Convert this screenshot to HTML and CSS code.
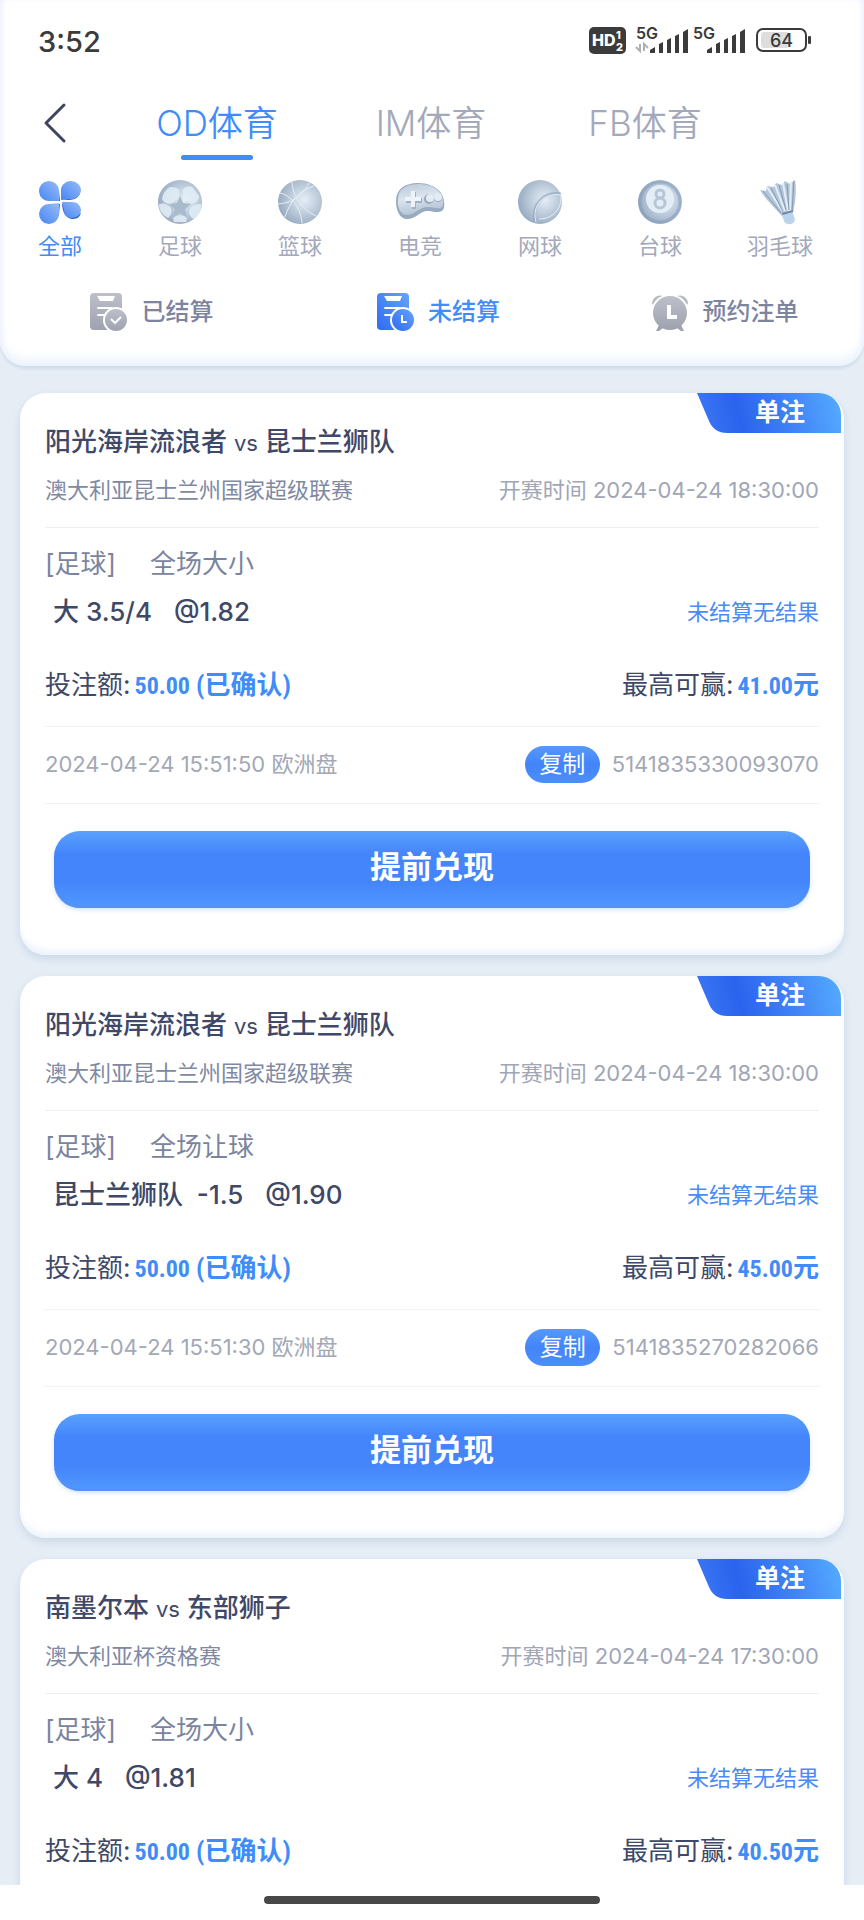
FILE: index.html
```
<!DOCTYPE html>
<html lang="zh-CN">

<head>
  <meta charset="UTF-8">
  <meta name="viewport" content="width=device-width, initial-scale=1.0">
  <title>注单记录</title>
  <link rel="stylesheet" href="styles.css">
</head>

<body>
  <!-- shared gradients for the icons -->
  <svg class="defs" aria-hidden="true">
    <defs>
      <radialGradient id="ball" cx="0.6" cy="0.45" r="0.6">
        <stop offset="0" stop-color="#e6eef6" />
        <stop offset="0.55" stop-color="#bccbdb" />
        <stop offset="1" stop-color="#98abc1" />
      </radialGradient>
      <linearGradient id="petal" x1="1" y1="0" x2="0" y2="1">
        <stop offset="0" stop-color="#97bcf8" />
        <stop offset="1" stop-color="#4785f3" />
      </linearGradient>
      <linearGradient id="pad" x1="0" y1="0" x2="0.3" y2="1">
        <stop offset="0" stop-color="#b9c7d8" />
        <stop offset="0.5" stop-color="#dbe4ee" />
        <stop offset="1" stop-color="#b4c3d5" />
      </linearGradient>
      <linearGradient id="gray" x1="0" y1="0" x2="0" y2="1">
        <stop offset="0" stop-color="#bdc0c9" />
        <stop offset="1" stop-color="#9ea2ae" />
      </linearGradient>
      <linearGradient id="blue" x1="1" y1="0" x2="0" y2="1">
        <stop offset="0" stop-color="#64a4fb" />
        <stop offset="1" stop-color="#2e6bf3" />
      </linearGradient>
    </defs>
  </svg>

  <div class="app">
    <header class="header">
      <div class="status-bar">
        <span class="clock">3:52</span>
        <svg class="status-icons" width="224" height="38" viewBox="0 -4 224 38" aria-hidden="true">
          <rect x="0" y="1" width="37" height="27" rx="5" fill="#3b3b3b" />
          <text x="3" y="20" font-size="16" font-weight="800" fill="#fff">HD</text>
          <text x="27" y="13" font-size="11" font-weight="800" fill="#fff">1</text>
          <text x="27" y="25" font-size="11" font-weight="800" fill="#fff">2</text>
          <text x="47" y="13" font-size="16" font-weight="600" fill="#3b3b3b">5G</text>
          <path d="M51 18v7l-4-4M55 25v-7l4 4" fill="none" stroke="#b0b0b0" stroke-width="2" />
          <g fill="#3b3b3b">
            <path d="M61 27v-3l5-3v6zM70 27v-9l4-2v11zM78 27v-13l4-2v15zM86 27v-17l4-2v19zM94 27v-21l5-3v24z" />
            <path d="M118 27v-3l5-3v6zM127 27v-9l4-2v11zM135 27v-13l4-2v15zM143 27v-17l4-2v19zM151 27v-21l5-3v24z" />
          </g>
          <text x="104" y="13" font-size="16" font-weight="600" fill="#3b3b3b">5G</text>
          <rect x="168" y="3" width="49" height="22" rx="6" fill="#fff" stroke="#3b3b3b" stroke-width="2" />
          <rect x="172" y="6" width="28" height="16" rx="3" fill="#dedede" />
          <rect x="219" y="10" width="3" height="8" rx="1" fill="#3b3b3b" />
          <text x="181" y="21" font-size="18" font-weight="500" fill="#3b3b3b">64</text>
        </svg>
      </div>

      <nav class="tabs">
        <button class="back" type="button" aria-label="返回">
          <svg width="24" height="42" viewBox="0 0 24 42" fill="none" stroke="#3f4460" stroke-width="3" stroke-linecap="round" stroke-linejoin="round">
            <path d="M21 3L3 21l18 18" />
          </svg>
        </button>
        <a href="#od" class="tab active">OD体育</a>
        <a href="#im" class="tab">IM体育</a>
        <a href="#fb" class="tab">FB体育</a>
      </nav>

      <nav class="sports">
        <a href="#all" class="sport active">
          <svg width="46" height="46" viewBox="0 0 46 46">
            <g fill="#3566b8">
              <path d="M22 22C22 12 20 6 16 4l6 8 1 10z" />
              <path d="M24 21h8c7 0 11-4 11-8l-6 6-13 2z" />
              <path d="M21 25c1 8 0 14-4 17l5-6 1-11z" />
              <path d="M25 24c0 9 4 16 11 16 5 0 7-3 8-6l-8 4-11-14z" />
            </g>
            <g fill="url(#petal)">
              <path d="M22 22h-9a10 10 0 1 1 9-10z" />
              <path d="M24 21v-9a10 9 0 1 1 9 8z" />
              <path d="M22 24v11a10 10 0 1 1-9-10z" />
              <path d="M25 23h9a9 8 0 1 1-6 13z" />
            </g>
          </svg>
          <span>全部</span>
        </a>
        <a href="#football" class="sport">
          <svg width="46" height="46" viewBox="0 0 46 46">
            <circle cx="23" cy="23" r="22" fill="url(#ball)" />
            <g fill="#e3eff7" opacity="0.85">
              <path d="M13 8q7 0 9 3v8l-8 6q-7 0-9-5 1-8 8-12z" />
              <path d="M26 10q5-4 9-2l7 9q0 6-7 8l-9-6z" />
              <path d="M2 25q7-2 12 4 2 6-3 10c-6-3-9-8-9-14z" />
              <path d="M44 25q-10-1-12 7 0 6 5 8c5-3 7-8 7-15z" />
              <path d="M16 39q7-6 14 0l-1 4H17z" />
            </g>
            <path d="M23 17l3 7 8 1-6 5 2 8-7-4-7 4 2-8-6-5 8-1z" fill="#a9bacd" />
          </svg>
          <span>足球</span>
        </a>
        <a href="#basketball" class="sport">
          <svg width="46" height="46" viewBox="0 0 46 46">
            <circle cx="23" cy="23" r="22" fill="url(#ball)" />
            <g fill="none" stroke="#e6eff7" stroke-width="1">
              <path d="M15 3c1 14 8 26 24 34" />
              <path d="M8 38C13 22 22 12 37 7" />
              <path d="M3 14c10 2 21 14 22 30M1 25c12-1 24-6 31-21" />
            </g>
          </svg>
          <span>篮球</span>
        </a>
        <a href="#esports" class="sport">
          <svg width="50" height="46" viewBox="0 0 50 46">
            <path d="M1 22C1 10 10 4 23 4c9 0 18 3 23 10 4 6 4 14 2 17-3 3-8 2-14 1-9-1-12 8-22 8C5 40 1 32 1 22z" fill="#98aac0" />
            <path d="M3 19C4 9 12 5 24 5c9 0 17 3 21 9 4 6 4 12 2 14-3 3-8 0-14 0-9 0-13 8-21 8-7 0-10-8-9-17z" fill="url(#pad)" />
            <path d="M17 13h4v6h6v5h-6v6h-4v-6h-6v-5h6z" fill="#9fb0c5" />
            <path d="M16 12h4v6h6v4h-6v6h-4v-6h-6v-4h6z" fill="#edf3f8" />
            <circle cx="34" cy="20" r="5" fill="#98aac0" />
            <circle cx="35" cy="19" r="4" fill="#e3ebf3" />
            <circle cx="43" cy="19" r="4" fill="#98aac0" />
            <circle cx="43" cy="18" r="4" fill="#e3ebf3" />
          </svg>
          <span>电竞</span>
        </a>
        <a href="#tennis" class="sport">
          <svg width="46" height="46" viewBox="0 0 46 46">
            <circle cx="23" cy="23" r="22" fill="url(#ball)" />
            <path d="M44 15C27 12 14 25 18 43" fill="none" stroke="#8398b1" stroke-width="3" opacity="0.5" />
            <path d="M44 16C28 13 14 26 19 43M44 16c1 14-8 24-22 24" fill="none" stroke="#e8f1f8" stroke-width="1" />
          </svg>
          <span>网球</span>
        </a>
        <a href="#billiards" class="sport">
          <svg width="46" height="46" viewBox="0 0 46 46">
            <circle cx="23" cy="23" r="22" fill="url(#ball)" />
            <circle cx="23" cy="23" r="20" fill="none" stroke="#7f9ab9" stroke-width="3" opacity="0.5" />
            <circle cx="23" cy="20" r="14" fill="#e3edf6" />
            <g fill="none" stroke="#b6c6d7" stroke-width="3">
              <circle cx="23" cy="15" r="4" />
              <circle cx="23" cy="24" r="5" />
            </g>
          </svg>
          <span>台球</span>
        </a>
        <a href="#badminton" class="sport">
          <svg width="46" height="46" viewBox="0 0 46 46">
            <path d="M3 11l6 1 1-5 7 1 2-4 6 2 3-4 5 3 5-4c2 12 0 24-2 33l-11 3C17 28 8 20 3 11z" fill="#b3c5d8" />
            <path d="M10 8l16 25M18 6l10 26M26 4l5 28M34 3l-1 29" fill="none" stroke="#e4edf5" stroke-width="2" />
            <path d="M6 12l18 22M14 9l12 24M22 6l7 25M30 5l2 26M37 2l-2 30" fill="none" stroke="#8399b4" stroke-width="1" />
            <path d="M24 34l11-3 3 10c-1 5-9 6-11 1z" fill="#bad4ec" />
            <path d="M25 35l11-3" stroke="#6c8aad" stroke-width="2" />
          </svg>
          <span>羽毛球</span>
        </a>
      </nav>

      <nav class="filters">
        <a href="#settled" class="filter">
          <svg width="38" height="38" viewBox="0 0 38 38">
            <rect x="1" y="0" width="32" height="37" rx="4" fill="url(#gray)" />
            <path d="M8 3h18l-2 5H11z" fill="#fff" />
            <path d="M9 15h14M9 22h7" stroke="#fff" stroke-width="2" stroke-linecap="round" />
            <circle cx="27" cy="27" r="13" fill="#fff" />
            <circle cx="27" cy="27" r="11" fill="url(#gray)" />
            <path d="M22 26l4 4 6-6" fill="none" stroke="#fff" stroke-width="2" />
          </svg>
          <span>已结算</span>
        </a>
        <a href="#unsettled" class="filter active">
          <svg width="38" height="38" viewBox="0 0 38 38">
            <rect x="1" y="0" width="32" height="37" rx="4" fill="url(#blue)" />
            <path d="M8 3h18l-2 5H11z" fill="#fff" />
            <path d="M9 15h14M9 22h7" stroke="#fff" stroke-width="2" stroke-linecap="round" />
            <circle cx="27" cy="27" r="13" fill="#fff" />
            <circle cx="27" cy="27" r="11" fill="url(#blue)" />
            <path d="M26 22v7h5" fill="none" stroke="#fff" stroke-width="2" />
          </svg>
          <span>未结算</span>
        </a>
        <a href="#reserved" class="filter">
          <svg width="38" height="38" viewBox="0 0 38 38">
            <path d="M1 10A8 8 0 0 1 12 3C7 4 4 8 2 12zM37 10A8 8 0 0 0 26 3c5 1 8 5 10 9z" fill="#b9bcc6" />
            <path d="M8 32l-3 6h3l4-3zM30 32l3 6h-3l-4-3z" fill="#9ea2ae" />
            <circle cx="19" cy="20" r="17" fill="url(#gray)" />
            <path d="M18 12v12h8" fill="none" stroke="#fff" stroke-width="4" />
          </svg>
          <span>预约注单</span>
        </a>
      </nav>
    </header>

    <main class="bets">
      <article class="card">
        <span class="ribbon">单注</span>
        <section class="match">
          <h2>阳光海岸流浪者 <small>vs</small> 昆士兰狮队</h2>
          <div class="row">
            <span class="league">澳大利亚昆士兰州国家超级联赛</span>
            <span class="muted">开赛时间 2024-04-24 18:30:00</span>
          </div>
        </section>
        <section class="bet">
          <div class="market"><span>[足球]</span><span>全场大小</span></div>
          <div class="row pick">
            <span class="selection"><span>大 3.5/4</span><span>@1.82</span></span>
            <span class="outcome">未结算无结果</span>
          </div>
          <div class="row stake">
            <span class="amount">投注额:<b><span class="num">50.00</span> (已确认)</b></span>
            <span class="amount">最高可赢:<b><span class="num">41.00</span>元</b></span>
          </div>
        </section>
        <section class="row order">
          <span>2024-04-24 15:51:50 欧洲盘</span>
          <span class="order-id"><button class="copy" type="button">复制</button>5141835330093070</span>
        </section>
        <button class="cashout" type="button">提前兑现</button>
      </article>

      <article class="card">
        <span class="ribbon">单注</span>
        <section class="match">
          <h2>阳光海岸流浪者 <small>vs</small> 昆士兰狮队</h2>
          <div class="row">
            <span class="league">澳大利亚昆士兰州国家超级联赛</span>
            <span class="muted">开赛时间 2024-04-24 18:30:00</span>
          </div>
        </section>
        <section class="bet">
          <div class="market"><span>[足球]</span><span>全场让球</span></div>
          <div class="row pick">
            <span class="selection"><span>昆士兰狮队&nbsp; -1.5</span><span>@1.90</span></span>
            <span class="outcome">未结算无结果</span>
          </div>
          <div class="row stake">
            <span class="amount">投注额:<b><span class="num">50.00</span> (已确认)</b></span>
            <span class="amount">最高可赢:<b><span class="num">45.00</span>元</b></span>
          </div>
        </section>
        <section class="row order">
          <span>2024-04-24 15:51:30 欧洲盘</span>
          <span class="order-id"><button class="copy" type="button">复制</button>5141835270282066</span>
        </section>
        <button class="cashout" type="button">提前兑现</button>
      </article>

      <article class="card">
        <span class="ribbon">单注</span>
        <section class="match">
          <h2>南墨尔本 <small>vs</small> 东部狮子</h2>
          <div class="row">
            <span class="league">澳大利亚杯资格赛</span>
            <span class="muted">开赛时间 2024-04-24 17:30:00</span>
          </div>
        </section>
        <section class="bet">
          <div class="market"><span>[足球]</span><span>全场大小</span></div>
          <div class="row pick">
            <span class="selection"><span>大 4</span><span>@1.81</span></span>
            <span class="outcome">未结算无结果</span>
          </div>
          <div class="row stake">
            <span class="amount">投注额:<b><span class="num">50.00</span> (已确认)</b></span>
            <span class="amount">最高可赢:<b><span class="num">40.50</span>元</b></span>
          </div>
        </section>
      </article>
    </main>

    <footer class="home-bar"><span></span></footer>
  </div>
</body>

</html>
```
FILE: styles.css
```
* {
  box-sizing: border-box;
}

body {
  margin: 0;
  background-color: #e6edf5;
  color: #404868;
  font-family: Inter, "Noto Sans CJK SC", sans-serif;
  font-size: 22px;
}

a {
  color: inherit;
  text-decoration: none;
}

button {
  border: none;
  padding: 0;
  background: none;
  font-family: inherit;
  cursor: pointer;
}

svg {
  display: block;
}

.defs {
  position: absolute;
  width: 0;
  height: 0;
}

.app {
  display: flex;
  flex-direction: column;
  height: 100vh;
}

/* Header */
.header {
  position: relative;
  flex: none;
  padding-bottom: 35px;
  background-color: #fff;
  border-radius: 0 0 26px 26px;
  box-shadow: inset 0 -8px 12px -2px #eaf2fd, inset 4px 0 6px -3px #e6effc, inset -4px 0 6px -3px #e6effc, 0 3px 3px #cfddec;
}

.status-bar {
  display: flex;
  justify-content: space-between;
  align-items: center;
  height: 82px;
  padding: 0 51px 0 38px;
}

.clock {
  color: #3b3b3b;
  font-size: 29px;
  font-weight: 500;
}

.tabs {
  display: grid;
  grid-template-columns: 110px repeat(3, 1fr) 112px;
}

.back {
  display: flex;
  align-items: center;
  padding-left: 43px;
  height: 82px;
}

.tab {
  display: flex;
  flex-direction: column;
  align-items: center;
  gap: 11px;
  padding-top: 20px;
  color: #a3a9bb;
  font-size: 35px;
  font-weight: 350;
  line-height: 42px;
}

.tab.active {
  color: #408cf8;
}

.tab.active::after {
  content: "";
  width: 72px;
  height: 5px;
  border-radius: 3px;
  background-color: #408cf8;
}

.sports {
  display: grid;
  grid-template-columns: repeat(7, 1fr);
  padding: 15px 24px 0 0;
}

.sport {
  display: flex;
  flex-direction: column;
  align-items: center;
  gap: 8px;
  color: #a3a9bb;
  line-height: 26px;
}

.filters {
  display: grid;
  grid-template-columns: 18fr 19fr 18fr;
  padding: 34px 0 0 12px;
}

.filter {
  display: flex;
  justify-content: center;
  align-items: center;
  gap: 14px;
  color: #7c849f;
  font-size: 24px;
  font-weight: 500;
  line-height: 38px;
}

.sport.active,
.filter.active {
  color: #408cf8;
}

/* Bet list */
.bets {
  flex: 1;
  min-height: 0;
  overflow: hidden;
  padding: 27px 20px 0;
}

.card {
  position: relative;
  margin-bottom: 21px;
  padding: 0 25px 47px;
  background-color: #fff;
  border-radius: 26px;
  box-shadow: inset 0 -8px 10px -4px #e9f1fc, 0 4px 8px #cad8e8;
}

.row {
  display: flex;
  justify-content: space-between;
  align-items: center;
}

.ribbon {
  position: absolute;
  top: 0;
  right: 3px;
  width: 144px;
  height: 40px;
  padding-left: 22px;
  background: linear-gradient(75deg, #3672f2 10%, #2a63ed 30%, #4184f7 65%, #55adff);
  clip-path: path("M0 0H122A22 22 0 0 1 144 22V40H30Q17 40 12 28Z");
  color: #fff;
  font-size: 25px;
  font-weight: 700;
  line-height: 38px;
  text-align: center;
}

.match {
  padding: 32px 0 22px;
  border-bottom: 1px solid #edeff3;
}

.match h2 {
  margin: 0 0 15px;
  font-size: 26px;
  font-weight: 500;
  line-height: 34px;
}

.match small {
  font-size: 22px;
  font-weight: 400;
}

.match .row {
  line-height: 30px;
}

.league {
  color: #8089a3;
}

.muted {
  color: #a0a6b6;
}

.bet {
  padding: 19px 0 23px;
  border-bottom: 1px solid #f1f3f6;
  font-size: 26px;
  line-height: 34px;
}

.market {
  display: flex;
  gap: 34px;
  color: #7b849f;
}

.pick {
  margin: 14px 0 39px;
  padding-left: 8px;
}

.selection {
  display: flex;
  gap: 22px;
  font-weight: 500;
}

.outcome {
  color: #4a8bf5;
  font-size: 22px;
  line-height: 32px;
}

.amount {
  display: flex;
  gap: 4px;
}

.stake b {
  color: #408cf8;
  font-family: "Liberation Sans Narrow", "Roboto Condensed", "Noto Sans CJK SC", sans-serif;
}

.num {
  font-size: 24px;
}

.order {
  height: 77px;
  padding-bottom: 2px;
  border-bottom: 1px solid #f1f3f6;
  color: #a3a8b6;
  line-height: 26px;
}

.order-id {
  display: flex;
  align-items: center;
  gap: 12px;
}

.copy {
  width: 75px;
  height: 37px;
  border-radius: 19px;
  background: linear-gradient(#5599fb, #4384f9 50%, #4b8ffa);
  color: #fff;
  font-size: 23px;
  line-height: 37px;
}

.cashout {
  display: block;
  width: calc(100% - 18px);
  height: 77px;
  margin: 27px auto 0;
  padding-bottom: 10px;
  border-radius: 26px;
  background: linear-gradient(#59a1ff, #4485fb 30%, #4485fb 65%, #5098ff);
  box-shadow: inset 0 -2px 1px #5a90f2, 0 2px 4px #cfe6fd;
  color: #fff;
  font-size: 31px;
  font-weight: 600;
}

/* Home indicator */
.home-bar {
  flex: none;
  display: flex;
  justify-content: center;
  height: 35px;
  padding-top: 11px;
  background-color: #fff;
}

.home-bar span {
  width: 39%;
  height: 8px;
  border-radius: 4px;
  background-color: #484848;
}
```
